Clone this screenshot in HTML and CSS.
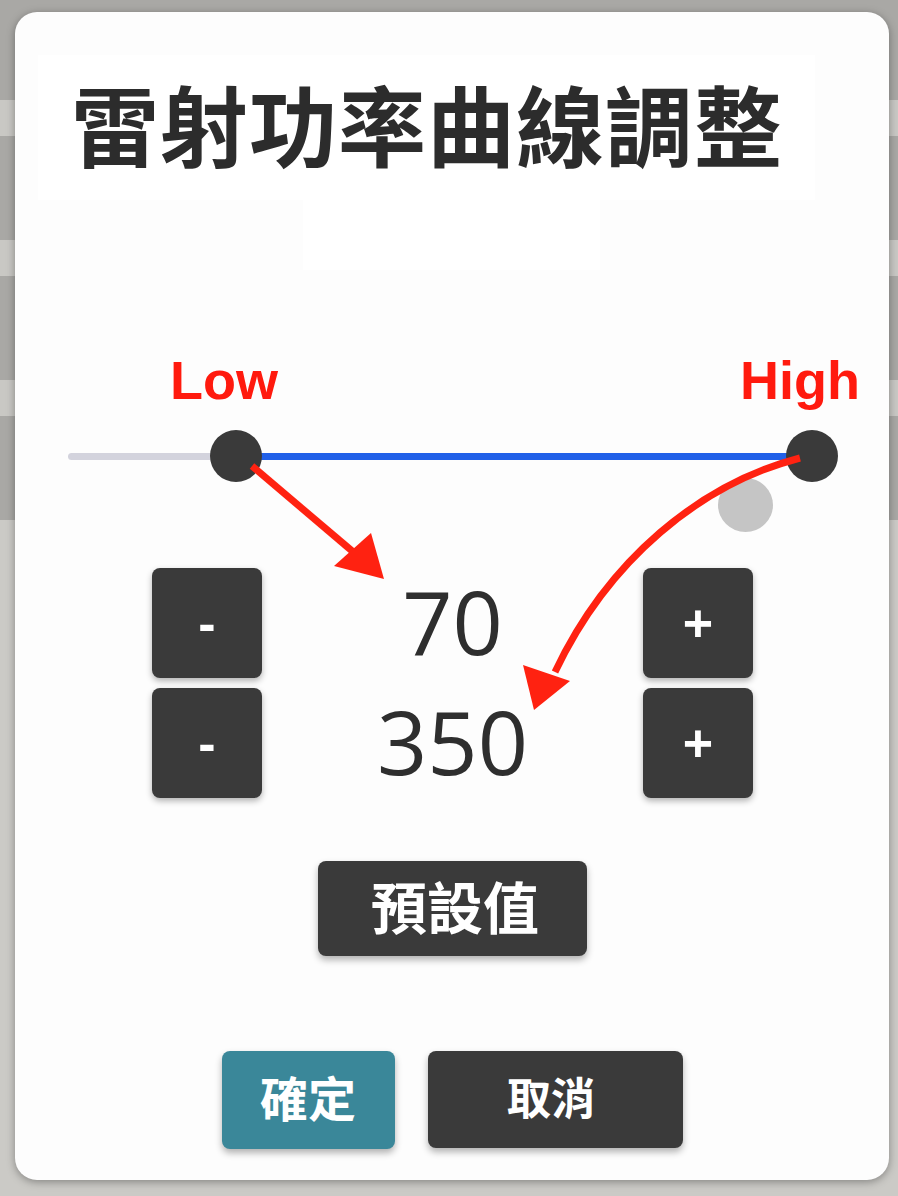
FILE: index.html
```html
<!DOCTYPE html>
<html lang="zh-Hant">

<head>
    <meta charset="UTF-8">
    <meta name="viewport" content="width=device-width, initial-scale=1.0">
    <title>雷射功率曲線調整</title>
    <link rel="stylesheet" href="styles.css">
</head>

<body>
    <div class="card">
        <div class="title">雷射功率曲線調整</div>
        <div class="subtitle"></div>

        <div class="labels">
            <span class="label">Low</span>
            <span class="label">High</span>
        </div>

        <div class="slider">
            <div class="track"></div>
            <div class="thumb thumb-low"></div>
            <div class="thumb thumb-high"></div>
            <div class="ghost"></div>
        </div>

        <div class="steppers">
            <button class="step">-</button>
            <div class="value">70</div>
            <button class="step">+</button>
            <button class="step">-</button>
            <div class="value">350</div>
            <button class="step">+</button>
        </div>

        <div class="preset-row">
            <button class="btn btn-preset">預設值</button>
        </div>

        <div class="footer">
            <button class="btn btn-ok">確定</button>
            <button class="btn btn-cancel">取消</button>
        </div>

        <!-- 標註箭頭，座標用頁面座標 -->
        <svg class="arrows" viewBox="15 12 874 1168" width="874" height="1168">
            <path d="M252 466 L358 556" stroke="#ff2211" stroke-width="7" fill="none" />
            <polygon points="384,579 334,566 371,533" fill="#ff2211" />
            <path d="M800 458 C700 484 608 560 555 672" stroke="#ff2211" stroke-width="7" fill="none" />
            <polygon points="534,710 523,665 570,681" fill="#ff2211" />
        </svg>
    </div>
</body>

</html>
```

FILE: styles.css
```css
* {
    margin: 0;
    padding: 0;
    box-sizing: border-box;
}

body {
    width: 898px;
    height: 1196px;
    overflow: hidden;
    /* 背後被遮住的列表 */
    background: linear-gradient(#a9a8a5 0, #a9a8a5 100px,
            #c9c8c4 100px, #c9c8c4 136px,
            #a9a8a5 136px, #a9a8a5 240px,
            #c9c8c4 240px, #c9c8c4 276px,
            #a9a8a5 276px, #a9a8a5 380px,
            #c9c8c4 380px, #c9c8c4 416px,
            #a9a8a5 416px, #a9a8a5 520px,
            #cbcac6 520px);
    font-family: "Noto Sans CJK TC", "Noto Sans", sans-serif;
}

.card {
    position: relative;
    display: flex;
    flex-direction: column;
    width: 874px;
    height: 1168px;
    margin: 12px 0 0 15px;
    background-color: #fdfdfd;
    border-radius: 22px;
    box-shadow: 0 2px 8px rgba(0, 0, 0, 0.35);
}

.title {
    display: flex;
    align-items: center;
    width: 777px;
    height: 145px;
    margin: 43px 0 0 23px;
    padding: 0 0 12px 33px;
    background-color: #fff;
    color: #2c2c2c;
    font-size: 88px;
    font-weight: 700;
    letter-spacing: 1px;
}

.subtitle {
    width: 297px;
    height: 70px;
    margin-left: 288px;
    background-color: #fff;
}

.labels {
    display: flex;
    justify-content: space-between;
    margin: 83px 29px 0 155px;
    color: #ff1a0e;
    font-family: "Liberation Sans", Arial, sans-serif;
    font-size: 54px;
    font-weight: 700;
    line-height: 54px;
}

.slider {
    position: relative;
    display: flex;
    align-items: center;
    height: 52px;
    margin: 23px 0 0 53px;
}

.track {
    width: 745px;
    height: 7px;
    border-radius: 4px;
    background: linear-gradient(to right, #d3d3dd 0, #d3d3dd 168px, #2160e8 168px);
}

.thumb {
    position: absolute;
    top: 0;
    width: 52px;
    height: 52px;
    border-radius: 50%;
    background-color: #3a3a3a;
}

.thumb-low {
    left: 142px;
}

.thumb-high {
    left: 718px;
}

.ghost {
    position: absolute;
    left: 650px;
    top: 48px;
    width: 55px;
    height: 54px;
    border-radius: 50%;
    background-color: #c5c5c5;
}

.steppers {
    display: grid;
    grid-template-columns: 110px 381px 110px;
    grid-auto-rows: 110px;
    row-gap: 10px;
    justify-content: center;
    margin-top: 86px;
    margin-left: 1px;
}

.step {
    border: none;
    border-radius: 8px;
    background-color: #3a3a3a;
    color: #fff;
    font-family: "Liberation Sans", Arial, sans-serif;
    font-size: 52px;
    font-weight: 700;
    box-shadow: 0 3px 6px rgba(0, 0, 0, 0.3);
}

.value {
    display: flex;
    align-items: center;
    justify-content: center;
    padding-bottom: 4px;
    color: #2e2e2e;
    font-family: "Open Sans", sans-serif;
    font-size: 88px;
    font-weight: 500;
}

.preset-row {
    display: flex;
    justify-content: center;
    margin-top: 63px;
}

.btn {
    border: none;
    border-radius: 8px;
    padding-bottom: 8px;
    color: #fff;
    font-family: "Noto Sans CJK TC", "Noto Sans", sans-serif;
    font-weight: 700;
    box-shadow: 0 4px 7px rgba(0, 0, 0, 0.3);
}

.btn-preset {
    width: 269px;
    height: 95px;
    padding-left: 6px;
    background-color: #3a3a3a;
    font-size: 56px;
}

.footer {
    display: flex;
    justify-content: center;
    gap: 33px;
    margin-top: 95px;
}

.btn-ok {
    width: 173px;
    height: 98px;
    background-color: #3a8799;
    font-size: 48px;
}

.btn-cancel {
    width: 255px;
    height: 97px;
    padding-right: 8px;
    background-color: #3a3a3a;
    font-size: 44px;
}

.arrows {
    position: absolute;
    left: 0;
    top: 0;
    pointer-events: none;
}
```
